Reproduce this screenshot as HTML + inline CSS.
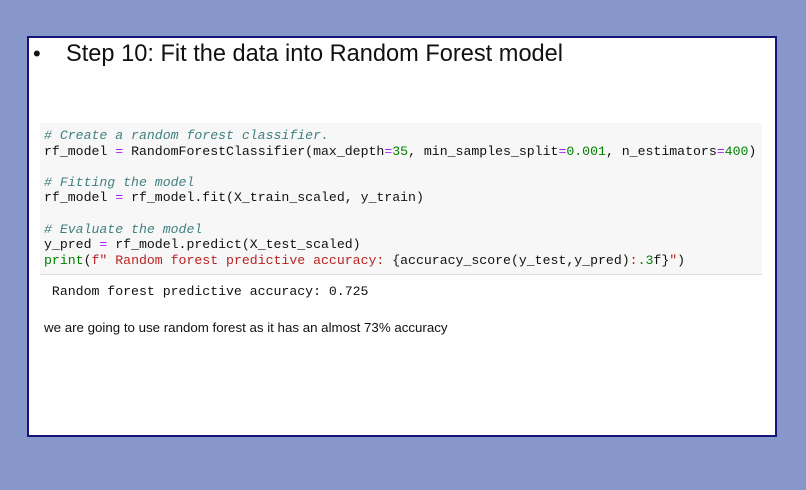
<!DOCTYPE html>
<html><head><meta charset="utf-8"><style>
html,body{margin:0;padding:0;}
body{width:806px;height:490px;background:#8797c9;position:relative;overflow:hidden;font-family:"Liberation Sans",sans-serif;}
.box{position:absolute;left:27px;top:36px;width:746px;height:397px;background:#fff;border:2px solid #14147a;}
.bullet{position:absolute;left:33px;top:41px;font-size:22px;color:#111;}
.title{position:absolute;left:66px;top:41px;font-size:23.6px;color:#111;white-space:pre;}
.code{position:absolute;left:40px;top:123px;width:722px;height:151px;background:#f7f7f7;border-bottom:1px solid #ddd;}
pre{margin:0;position:absolute;left:44px;font-family:"Liberation Mono",monospace;font-size:13.2px;line-height:15.6px;color:#111;}
.c{color:#408080;font-style:italic}.o{color:#aa22ff}.n{color:#008000}.s{color:#ba2121}
.out{position:absolute;left:51px;top:284px;}
.txt{position:absolute;left:44px;top:320px;font-size:13.3px;color:#111;}
</style></head><body>
<div class="box"></div>
<div class="bullet">•</div>
<div class="title">Step 10: Fit the data into Random Forest model</div>
<div class="code"></div>
<pre style="top:128px"><span class="c"># Create a random forest classifier.</span>
rf_model <span class="o">=</span> RandomForestClassifier(max_depth<span class="o">=</span><span class="n">35</span>, min_samples_split<span class="o">=</span><span class="n">0.001</span>, n_estimators<span class="o">=</span><span class="n">400</span>)

<span class="c"># Fitting the model</span>
rf_model <span class="o">=</span> rf_model.fit(X_train_scaled, y_train)

<span class="c"># Evaluate the model</span>
y_pred <span class="o">=</span> rf_model.predict(X_test_scaled)
<span class="n">print</span>(<span class="s">f" Random forest predictive accuracy: </span>{accuracy_score(y_test,y_pred)<span class="s">:</span><span class="n">.3</span>f}<span class="s">"</span>)</pre>
<pre class="out" style="left:44px">&nbsp;Random forest predictive accuracy: 0.725</pre>
<div class="txt">we are going to use random forest as it has an almost 73% accuracy</div>
</body></html>
